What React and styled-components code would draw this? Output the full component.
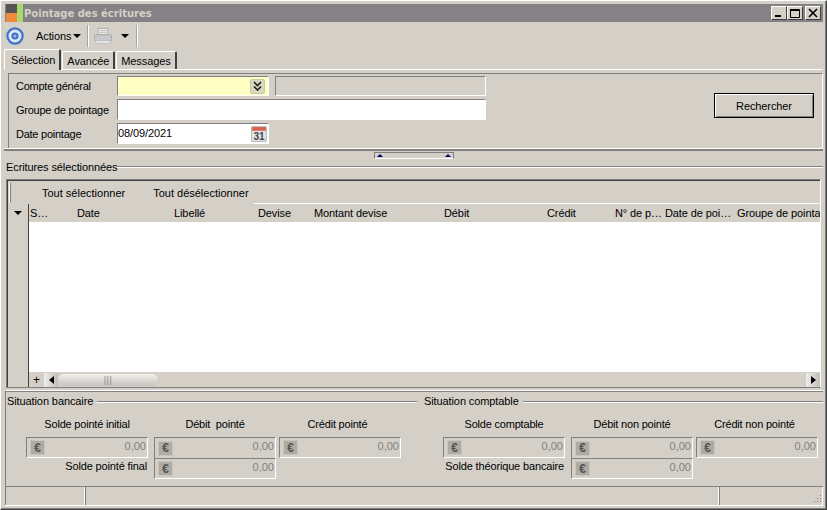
import React from 'react'
import styled, { createGlobalStyle } from 'styled-components'

const GlobalStyle = createGlobalStyle`
  html, body {
    margin: 0;
    padding: 0;
    background: #d4d0c8;
  }
`

const columns = [
  { label: 'S…', width: 47 },
  { label: 'Date', width: 97 },
  { label: 'Libellé', width: 84 },
  { label: 'Devise', width: 56 },
  { label: 'Montant devise', width: 130 },
  { label: 'Débit', width: 103 },
  { label: 'Crédit', width: 68 },
  { label: 'N° de p…', width: 50 },
  { label: 'Date de poi…', width: 72 },
  { label: 'Groupe de pointage', width: 100 },
]

const EuroField = ({ joined }) => (
  <Amount $joined={joined}>
    <EuroButton>€</EuroButton>
    <AmountValue>0,00</AmountValue>
  </Amount>
)

export default function App() {
  return (
    <Window>
      <GlobalStyle />
      <TitleBar>
        <AppIcon>
          <svg width="17" height="18" viewBox="0 0 17 18">
            <rect x="0" y="0" width="11" height="9" fill="#555" />
            <rect x="0" y="9" width="11" height="9" fill="#f08a3c" />
            <rect x="11" y="0" width="6" height="18" fill="#a6d86c" />
          </svg>
        </AppIcon>
        <TitleText>Pointage des écritures</TitleText>
        <WinButtons>
          <WinButton>
            <svg width="10" height="10" viewBox="0 0 10 10"><rect x="1" y="7" width="6" height="2" fill="#000" /></svg>
          </WinButton>
          <WinButton>
            <svg width="10" height="10" viewBox="0 0 10 10"><path d="M0.5 1.5h9v8h-9z M0.5 1v1.5h9" fill="none" stroke="#000" /></svg>
          </WinButton>
          <WinButton $gap>
            <svg width="10" height="10" viewBox="0 0 10 10"><path d="M1 1l8 8M9 1l-8 8" stroke="#000" strokeWidth="1.6" /></svg>
          </WinButton>
        </WinButtons>
      </TitleBar>

      <Toolbar>
        <svg width="18" height="18" viewBox="0 0 18 18">
          <circle cx="9" cy="9" r="7.6" fill="#dfe6f6" stroke="#3f74c9" strokeWidth="2.2" />
          <circle cx="9" cy="9" r="3.6" fill="#3f74c9" />
          <circle cx="9" cy="9" r="1.5" fill="#9ebbe8" />
        </svg>
        <ActionsButton>Actions<Caret /></ActionsButton>
        <ToolSep />
        <PrintButton>
          <svg width="18" height="18" viewBox="0 0 20 18">
            <rect x="4.5" y="0.5" width="11" height="7" fill="#eceaea" stroke="#a8a8a8" />
            <rect x="0.5" y="7.5" width="19" height="7" rx="1.5" fill="#c8c8cc" stroke="#a8a8a8" />
            <rect x="2" y="14" width="16" height="3" fill="#e8e8e8" stroke="#b4b4b4" strokeWidth="0.7" />
            <path d="M6 3h8M6 5h8" stroke="#bbb" />
          </svg>
        </PrintButton>
        <PrintCaret><Caret /></PrintCaret>
        <ToolSep />
      </Toolbar>

      <TabStrip>
        <Tab $active>Sélection</Tab>
        <Tab>Avancée</Tab>
        <Tab>Messages</Tab>
      </TabStrip>

      <TabPage>
        <SearchBox>
          <SearchForm>
            <FormLabel>Compte général</FormLabel>
            <FormInputs>
              <Input $bg="#ffffc4" $width={152}>
                <ChevronButton>
                  <svg width="9" height="10" viewBox="0 0 9 10">
                    <path d="M1 1l3.5 3.5L8 1M1 5.5L4.5 9 8 5.5" fill="none" stroke="#222" strokeWidth="1.7" />
                  </svg>
                </ChevronButton>
              </Input>
              <Input $bg="#d4d0c8" $width={211} />
            </FormInputs>
            <FormLabel>Groupe de pointage</FormLabel>
            <FormInputs>
              <Input $bg="#fff" $width={369} />
            </FormInputs>
            <FormLabel>Date pointage</FormLabel>
            <FormInputs>
              <Input $bg="#fff" $width={152}>
                <DateValue>08/09/2021</DateValue>
                <CalendarIcon>
                  <svg width="16" height="16" viewBox="0 0 15 15">
                    <rect x="0.5" y="0.5" width="14" height="14" rx="1" fill="#e4e4e4" stroke="#bbb" />
                    <rect x="1" y="1" width="13" height="3.5" fill="#d9634f" />
                    <text x="7.5" y="13" textAnchor="middle" fontSize="9.5" fontWeight="700" fontFamily="'Liberation Sans', sans-serif" fill="#3c4650">31</text>
                  </svg>
                </CalendarIcon>
              </Input>
            </FormInputs>
          </SearchForm>
          <SearchButton>Rechercher</SearchButton>
        </SearchBox>
      </TabPage>

      <Splitter>
        <SplitHandle>
          <UpArrow />
          <UpArrow />
        </SplitHandle>
      </Splitter>

      <GridTitle>
        <span>Ecritures sélectionnées</span>
        <GroupLine />
      </GridTitle>

      <GridFrame>
        <GridToolbar>
          <GridGrip />
          <GridAction>Tout sélectionner</GridAction>
          <GridAction>Tout désélectionner</GridAction>
          <ToolbarRest />
        </GridToolbar>
        <GridBody>
          <RowHeader>
            <RowHeaderTop><Caret /></RowHeaderTop>
          </RowHeader>
          <GridMain>
            <HeaderRow style={{ gridTemplateColumns: columns.map((c) => c.width + 'px').join(' ') }}>
              {columns.map((c) => <HeaderCell key={c.label}>{c.label}</HeaderCell>)}
            </HeaderRow>
            <Rows />
            <ScrollRow>
              <Expand>+</Expand>
              <ScrollArrow>
                <svg width="5" height="8" viewBox="0 0 5 8"><path d="M5 0v8L0 4z" fill="#000" /></svg>
              </ScrollArrow>
              <ScrollThumb><ThumbGrip>|||</ThumbGrip></ScrollThumb>
              <ScrollTrack />
              <ScrollArrow>
                <svg width="5" height="8" viewBox="0 0 5 8"><path d="M0 0v8l5-4z" fill="#000" /></svg>
              </ScrollArrow>
            </ScrollRow>
          </GridMain>
        </GridBody>
      </GridFrame>

      <Summary>
        <SummaryTitles>
          <GroupTitle $pad={1}>
            <span>Situation bancaire</span>
            <GroupLine />
          </GroupTitle>
          <GroupTitle $pad={7}>
            <span>Situation comptable</span>
            <GroupLine />
          </GroupTitle>
        </SummaryTitles>
        <SummaryBlocks>
          <Block>
            <ColTitle>Solde pointé initial</ColTitle>
            <ColTitle>Débit  pointé</ColTitle>
            <ColTitle>Crédit pointé</ColTitle>
            <EuroField />
            <EuroField joined />
            <EuroField />
            <RowLabel>Solde pointé final</RowLabel>
            <EuroField />
          </Block>
          <Block>
            <ColTitle>Solde comptable</ColTitle>
            <ColTitle>Débit non pointé</ColTitle>
            <ColTitle>Crédit non pointé</ColTitle>
            <EuroField />
            <EuroField joined />
            <EuroField />
            <RowLabel>Solde théorique bancaire</RowLabel>
            <EuroField />
          </Block>
        </SummaryBlocks>
      </Summary>

      <StatusBar>
        <StatusCell $width={80} />
        <StatusCell $grow />
        <StatusCell $width={104}>
          <svg width="11" height="11" viewBox="0 0 11 11">
            <path d="M9 1h1v1H9zM6 4h1v1H6zM9 4h1v1H9zM3 7h1v1H3zM6 7h1v1H6zM9 7h1v1H9z" fill="#808080" />
          </svg>
        </StatusCell>
      </StatusBar>
    </Window>
  )
}

const Window = styled.div`
  box-sizing: border-box;
  width: 827px;
  height: 510px;
  padding: 3px 3px 3px;
  background: #d4d0c8;
  border-top: 1px solid #fff;
  border-left: 1px solid #fff;
  border-right: 1px solid #404040;
  border-bottom: 1px solid #404040;
  box-shadow: inset -1px -1px 0 #808080;
  display: flex;
  flex-direction: column;
  overflow: hidden;
  font-family: 'Liberation Sans', Arial, sans-serif;
  font-size: 11px;
  letter-spacing: -0.1px;
  color: #000;
`

const TitleBar = styled.div`
  flex: none;
  height: 18px;
  margin: 0 0 0 1px;
  padding-left: 1px;
  background: #848284;
  display: flex;
  align-items: center;
`

const AppIcon = styled.div`
  width: 18px;
  height: 18px;
  display: flex;
`

const TitleText = styled.div`
  font-family: 'DejaVu Sans', Verdana, sans-serif;
  font-weight: 700;
  font-size: 10px;
  letter-spacing: 0;
  color: #d4d0c8;
`

const WinButtons = styled.div`
  margin-left: auto;
  margin-right: 2px;
  display: flex;
`

const WinButton = styled.div`
  box-sizing: border-box;
  width: 16px;
  height: 14px;
  margin-left: ${(p) => (p.$gap ? '2px' : '0')};
  background: #d4d0c8;
  border-top: 1px solid #fff;
  border-left: 1px solid #fff;
  border-right: 1px solid #404040;
  border-bottom: 1px solid #404040;
  display: flex;
  align-items: center;
  justify-content: center;
`

const Toolbar = styled.div`
  flex: none;
  height: 27px;
  padding-left: 2px;
  display: flex;
  align-items: center;
`

const Caret = styled.span`
  display: inline-block;
  width: 0;
  height: 0;
  border-left: 4px solid transparent;
  border-right: 4px solid transparent;
  border-top: 4px solid #000;
`

const ActionsButton = styled.div`
  margin-left: 12px;
  width: 48px;
  display: flex;
  align-items: center;
  gap: 2px;
`

const ToolSep = styled.div`
  width: 1px;
  height: 22px;
  margin-left: 3px;
  background: #a8a59e;
  box-shadow: 1px 0 0 #fff;
`

const PrintButton = styled.div`
  margin-left: 6px;
  display: flex;
`

const PrintCaret = styled.div`
  margin-left: 9px;
  width: 12px;
  display: flex;
`

const TabStrip = styled.div`
  flex: none;
  height: 20px;
  display: flex;
  align-items: flex-end;
`

const Tab = styled.div`
  box-sizing: border-box;
  height: ${(p) => (p.$active ? '21px' : '18px')};
  padding: ${(p) => (p.$active ? '0 4px 0 6px' : '0 4px')};
  margin-right: 1px;
  margin-bottom: ${(p) => (p.$active ? '-1px' : '0')};
  background: #d4d0c8;
  position: relative;
  z-index: ${(p) => (p.$active ? 1 : 0)};
  display: flex;
  align-items: center;
  border-top: 1px solid #fff;
  border-left: 1px solid #fff;
  border-right: 2px solid #404040;
  border-radius: 2px 2px 0 0;
`

const TabPage = styled.div`
  flex: none;
  height: 80px;
  box-sizing: border-box;
  border-top: 1px solid #fff;
  padding: 3px 0 0 4px;
`

const SearchBox = styled.div`
  box-sizing: border-box;
  height: 75px;
  padding: 2px 8px 0 7px;
  border-top: 1px solid #808080;
  border-left: 1px solid #808080;
  border-right: 1px solid #fff;
  display: flex;
  justify-content: space-between;
`

const SearchForm = styled.div`
  display: grid;
  grid-template-columns: 101px auto;
  grid-template-rows: 20px 21px 21px;
  row-gap: 3px;
  align-items: center;
  align-content: start;
`

const FormLabel = styled.div`
  white-space: nowrap;
  letter-spacing: -0.25px;
`

const FormInputs = styled.div`
  height: 100%;
  display: flex;
  gap: 6px;
`

const Input = styled.div`
  box-sizing: border-box;
  width: ${(p) => p.$width}px;
  height: 100%;
  background: ${(p) => p.$bg};
  border-top: 1px solid #808080;
  border-left: 1px solid #808080;
  border-right: 1px solid #fff;
  border-bottom: 1px solid #fff;
  display: flex;
  align-items: center;
  justify-content: flex-end;
  position: relative;
`

const ChevronButton = styled.div`
  box-sizing: border-box;
  width: 15px;
  height: 15px;
  margin-right: 3px;
  background: #d8d8bc;
  border: 1px solid #c8c8b0;
  border-radius: 2px;
  display: flex;
  align-items: center;
  justify-content: center;
`

const DateValue = styled.span`
  margin-right: auto;
  margin-bottom: 1px;
`

const CalendarIcon = styled.div`
  margin-right: 1px;
  display: flex;
`

const SearchButton = styled.div`
  box-sizing: border-box;
  width: 100px;
  height: 25px;
  margin-top: 17px;
  background: #d4d0c8;
  border: 1px solid #000;
  box-shadow: inset 1px 1px 0 #fff, inset -1px -1px 0 #808080;
  display: flex;
  align-items: center;
  justify-content: center;
`

const Splitter = styled.div`
  flex: none;
  height: 9px;
  border-top: 2px solid #808080;
  display: flex;
  justify-content: center;
  box-shadow: 0 -1px 0 #fff;
`

const SplitHandle = styled.div`
  box-sizing: border-box;
  width: 80px;
  height: 7px;
  margin-top: 1px;
  padding: 0 2px;
  background: #d4d0c8;
  border-top: 1px solid #808080;
  border-left: 1px solid #808080;
  border-right: 1px solid #808080;
  border-bottom: 1px solid #fff;
  display: flex;
  justify-content: space-between;
  align-items: center;
`

const UpArrow = styled.span`
  width: 0;
  height: 0;
  border-left: 3px solid transparent;
  border-right: 3px solid transparent;
  border-bottom: 3px solid #00006c;
`

const GroupTitle = styled.div`
  height: 14px;
  padding-left: ${(p) => p.$pad}px;
  display: flex;
  align-items: center;
  gap: 4px;
  white-space: nowrap;
`

const GridTitle = styled(GroupTitle)`
  flex: none;
  height: 13px;
  margin-bottom: 6px;
  padding-left: 2px;
  gap: 0;
`

const GroupLine = styled.div`
  flex: 1;
  height: 1px;
  background: #808080;
  box-shadow: 0 1px 0 #fff;
`

const GridFrame = styled.div`
  box-sizing: border-box;
  flex: none;
  height: 209px;
  margin: 0 2px;
  border-top: 1px solid #808080;
  border-left: 1px solid #808080;
  border-right: 1px solid #fff;
  border-bottom: 1px solid #808080;
  box-shadow: inset 1px 1px 0 #404040;
  padding: 1px 0 0 1px;
  display: flex;
  flex-direction: column;
  overflow: hidden;
`

const GridToolbar = styled.div`
  flex: none;
  height: 23px;
  padding-left: 1px;
  display: flex;
  align-items: center;
`

const GridGrip = styled.div`
  width: 1px;
  height: 19px;
  background: #fff;
  box-shadow: 1px 0 0 #808080;
`

const GridAction = styled.div`
  margin-left: 28px;
  letter-spacing: 0;
  &:nth-child(2) {
    margin-left: 32px;
  }
`

const ToolbarRest = styled.div`
  flex: 1;
  align-self: stretch;
  margin-left: 5px;
  border-bottom: 1px solid #fff;
`

const GridBody = styled.div`
  flex: 1;
  min-height: 0;
  display: flex;
`

const RowHeader = styled.div`
  flex: none;
  width: 20px;
  border-right: 1px solid #404040;
`

const RowHeaderTop = styled.div`
  height: 18px;
  display: flex;
  align-items: center;
  justify-content: center;
`

const GridMain = styled.div`
  flex: 1;
  min-width: 0;
  display: flex;
  flex-direction: column;
`

const HeaderRow = styled.div`
  flex: none;
  height: 18px;
  padding-left: 1px;
  display: grid;
  align-items: center;
  box-sizing: border-box;
  overflow: hidden;
  white-space: nowrap;
`

const HeaderCell = styled.div`
  overflow: hidden;
`

const Rows = styled.div`
  flex: 1;
  background: #fff;
`

const ScrollRow = styled.div`
  flex: none;
  height: 15px;
  display: flex;
  align-items: center;
`

const Expand = styled.div`
  width: 15px;
  text-align: center;
  font-size: 12px;
`

const ScrollArrow = styled.div`
  box-sizing: border-box;
  width: 14px;
  height: 14px;
  background: linear-gradient(90deg, #eee, #c0bdb6);
  display: flex;
  align-items: center;
  justify-content: center;
`

const ScrollThumb = styled.div`
  box-sizing: border-box;
  width: 100px;
  height: 12px;
  background: linear-gradient(#f2f1ee, #c6c4bd);
  border-radius: 6px;
  display: flex;
  align-items: center;
  justify-content: center;
`

const ThumbGrip = styled.span`
  font-size: 9px;
  color: #808080;
  letter-spacing: 0.5px;
`

const ScrollTrack = styled.div`
  flex: 1;
`

const Summary = styled.div`
  flex: none;
  height: 97px;
  box-sizing: border-box;
  border-top: 1px solid #fff;
  box-shadow: inset 0 1px 0 #808080;
  margin: 2px 0 0 1px;
  padding-top: 3px;
  border-left: 1px solid #808080;
`

const SummaryTitles = styled.div`
  display: grid;
  grid-template-columns: 411px 1fr;
`

const SummaryBlocks = styled.div`
  display: flex;
  padding: 8px 0 0 20px;
  gap: 42px;
`

const Block = styled.div`
  display: grid;
  grid-template-columns: 128px 125px 122px;
  grid-template-rows: 21px 21px 20px;
  & > * {
    width: 122px;
  }
`

const ColTitle = styled.div`
  box-sizing: border-box;
  padding-top: 2px;
  text-align: center;
  white-space: pre;
  letter-spacing: -0.2px;
  &:nth-child(3) {
    padding-right: 5px;
  }
`

const RowLabel = styled.div`
  box-sizing: border-box;
  text-align: right;
  padding: 2px 1px 0 0;
  white-space: nowrap;
  letter-spacing: -0.15px;
`

const Amount = styled.div`
  box-sizing: border-box;
  height: 21px;
  padding: 0 1px 0 3px;
  border-top: 1px solid #808080;
  border-left: 1px solid #808080;
  border-right: 1px solid #fff;
  border-bottom: ${(p) => (p.$joined ? 'none' : '1px solid #fff')};
  color: #808080;
  display: flex;
  align-items: center;
  justify-content: space-between;
`

const AmountValue = styled.span`
  margin-bottom: 4px;
  letter-spacing: 0;
`

const EuroButton = styled.div`
  box-sizing: border-box;
  width: 15px;
  height: 15px;
  background: #aeaba4;
  border: 1px solid #c8c5bd;
  color: #55534f;
  font-weight: 700;
  font-size: 12px;
  display: flex;
  align-items: center;
  justify-content: center;
`

const StatusBar = styled.div`
  flex: none;
  height: 19px;
  margin: auto 0 0 1px;
  box-sizing: border-box;
  display: flex;
  box-shadow: 0 -1px 0 #808080;
  border-bottom: 1px solid #fff;
`

const StatusCell = styled.div`
  box-sizing: border-box;
  width: ${(p) => (p.$width ? p.$width + 'px' : 'auto')};
  flex: ${(p) => (p.$grow ? 1 : 'none')};
  border-right: 1px solid #fff;
  border-left: 1px solid #808080;
  display: flex;
  align-items: flex-end;
  justify-content: flex-end;
`
